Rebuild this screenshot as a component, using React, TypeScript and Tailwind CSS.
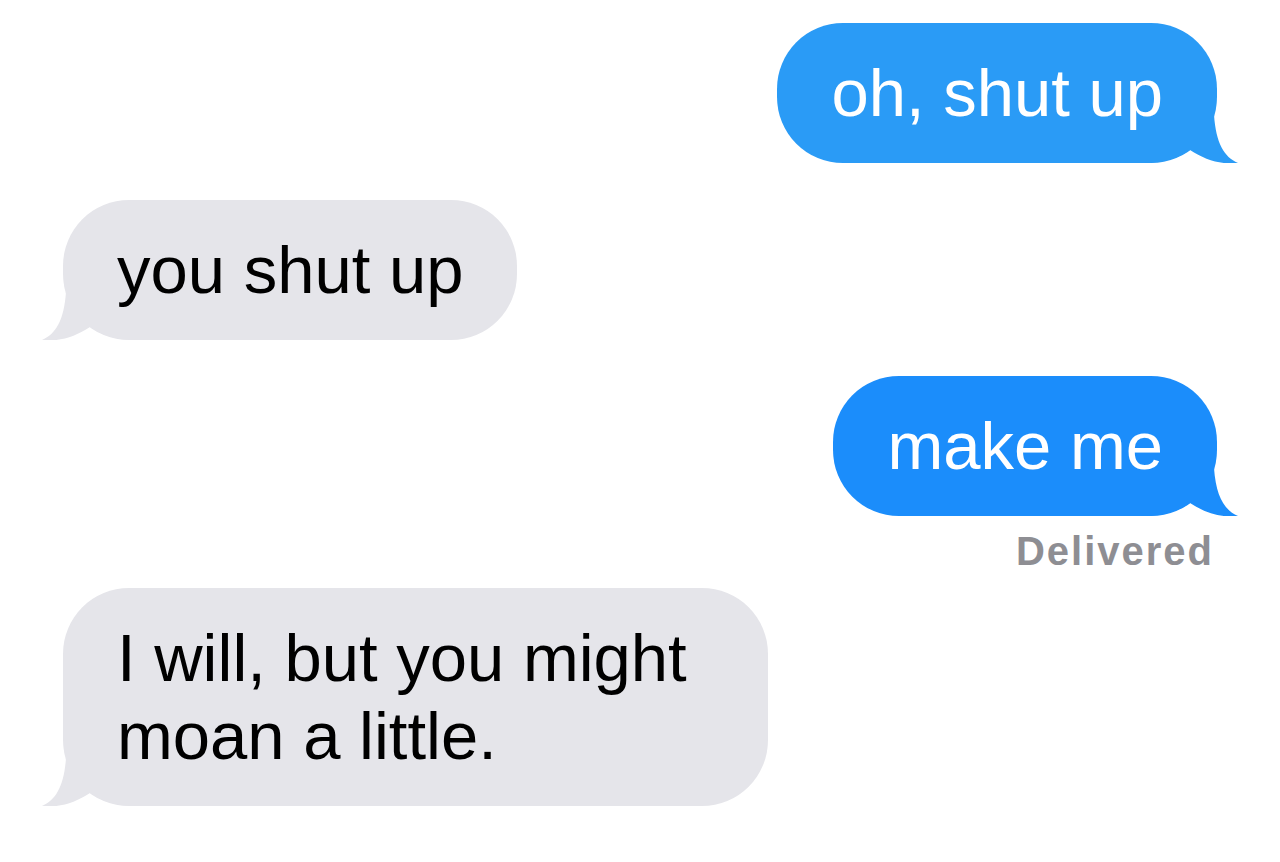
import React from 'react';

type Side = 'left' | 'right';

const Tail: React.FC<{ side: Side; color: string }> = ({ side, color }) => (
  <svg
    viewBox="0 0 100 50"
    className={
      side === 'right'
        ? 'absolute bottom-0 -right-[21px] w-[100px] h-[50px]'
        : 'absolute bottom-0 -left-[21px] w-[100px] h-[50px] -scale-x-100'
    }
    fill={color}
  >
    <path d="M76,2 C78,30 86,44 100,50 C84,52 67,47 52,37 C40,45 27,50 2,50 L2,2 Z" />
  </svg>
);

const Bubble: React.FC<{
  side: Side;
  color: string;
  children: React.ReactNode;
  className?: string;
  width?: string;
}> = ({ side, color, children, className = '', width = 'w-fit' }) => (
  <div
    className={`relative ${width} rounded-[66px] px-[54px] py-[31px] text-[67px] leading-[78px] ${
      side === 'right' ? 'self-end text-white' : 'self-start text-black'
    } ${className}`}
    style={{ backgroundColor: color }}
  >
    <Tail side={side} color={color} />
    <span className="relative">{children}</span>
  </div>
);

export default function App() {
  return (
    <div className="min-h-screen bg-white px-[63px] pt-[23px] flex flex-col font-['Liberation_Sans',Arial,sans-serif]">
      <Bubble side="right" color="#2a9bf6">
        oh, shut up
      </Bubble>

      <Bubble side="left" color="#e5e5ea" className="mt-[37px]">
        you shut up
      </Bubble>

      <Bubble side="right" color="#1b8dfb" className="mt-[36px]">
        make me
      </Bubble>

      {/* Delivered receipt */}
      <div className="self-end mt-[11px] mr-[3px] text-[40px] leading-[48px] font-bold tracking-[2px] text-[#8e8e93]">
        Delivered
      </div>

      <Bubble side="left" color="#e5e5ea" className="mt-[13px]" width="w-[705px]">
        I will, but you might
        <br />
        moan a little.
      </Bubble>
    </div>
  );
}
